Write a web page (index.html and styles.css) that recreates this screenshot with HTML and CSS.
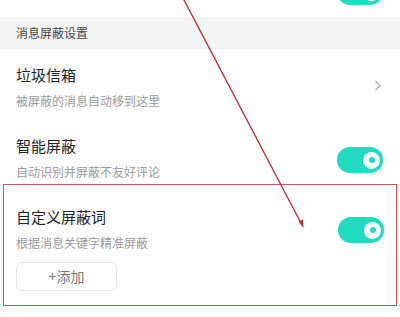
FILE: index.html
```html
<!DOCTYPE html>
<html lang="zh">
<head>
<meta charset="utf-8">
<link rel="stylesheet" href="styles.css">
</head>
<body>
<div class="page">
  <div class="row row-prev">
    <div class="text">
      <div class="title">消息提醒</div>
      <div class="sub">开启后接收新消息提醒</div>
    </div>
    <div class="toggle toggle-prev"><span class="knob"></span></div>
  </div>
  <div class="section">消息屏蔽设置</div>
  <div class="row">
    <div class="text">
      <div class="title">垃圾信箱</div>
      <div class="sub">被屏蔽的消息自动移到这里</div>
    </div>
    <svg class="chevron" width="8" height="11" viewBox="0 0 8 11"><polyline points="1.5,1 6,5.5 1.5,10" fill="none" stroke="#b0b0b0" stroke-width="1.3"/></svg>
  </div>
  <div class="row row-last">
    <div class="text">
      <div class="title">智能屏蔽</div>
      <div class="sub">自动识别并屏蔽不友好评论</div>
    </div>
    <div class="toggle"><span class="knob"></span></div>
  </div>
  <div class="boxed">
    <div class="boxed-head">
      <div class="text">
        <div class="title">自定义屏蔽词</div>
        <div class="sub">根据消息关键字精准屏蔽</div>
      </div>
      <div class="toggle toggle-box"><span class="knob"></span></div>
    </div>
    <div class="add-btn">+添加</div>
  </div>
  <svg class="arrow" width="400" height="317" viewBox="0 0 400 317">
    <line x1="183" y1="-2" x2="302" y2="225" stroke="#b3343c" stroke-width="1.4"/>
    <polygon points="303.5,228 298.5,221.5 303,219.5" fill="#b3343c"/>
  </svg>
</div>
</body>
</html>
```
FILE: styles.css
```css
html, body {
  margin: 0;
  padding: 0;
  background: #fff;
}
body {
  font-family: "Noto Sans CJK SC", "Noto Sans", sans-serif;
  width: 400px;
  height: 317px;
  overflow: hidden;
}
.page {
  position: relative;
  width: 400px;
  height: 317px;
  overflow: hidden;
}
.row {
  display: flex;
  align-items: center;
  justify-content: space-between;
  padding: 15px 17px 10px 16px;
  height: 46px;
}
.row-prev {
  margin-top: -58px;
  padding-bottom: 14px;
}
.row-last {
  padding-bottom: 3px;
}
.text {
  display: flex;
  flex-direction: column;
}
.title {
  font-size: 15px;
  line-height: 22px;
  color: #222;
}
.sub {
  margin-top: 6px;
  font-size: 12px;
  line-height: 18px;
  color: #9a9a9a;
}
.row-prev .sub {
  color: #c8c8c8;
}
.section {
  height: 32px;
  background: #f4f4f4;
  padding-left: 16px;
  font-size: 12px;
  line-height: 32px;
  color: #444;
}
.chevron {
  margin-top: -4px;
  margin-right: 1px;
}
.toggle {
  position: relative;
  width: 46px;
  height: 26px;
  border-radius: 13px;
  background: #1fdbbf;
  margin-top: 4px;
  display: flex;
  align-items: center;
  justify-content: flex-end;
  padding-right: 3px;
  box-sizing: border-box;
}
.toggle-prev {
  margin-top: 24px;
}
.toggle-box {
  margin-top: 2px;
}
.knob {
  width: 17px;
  height: 17px;
  border-radius: 50%;
  background: #fff;
  display: flex;
  align-items: center;
  justify-content: center;
}
.knob::after {
  content: "";
  width: 6px;
  height: 6px;
  border-radius: 50%;
  background: #1fdbbf;
}
.boxed {
  margin: 0 3px;
  border: 1.5px solid #c6585a;
  padding: 21px 12px 11px 12px;
  height: 88px;
}
.boxed-head {
  display: flex;
  align-items: center;
  justify-content: space-between;
}
.add-btn {
  margin-top: 10px;
  width: 99px;
  height: 27px;
  border: 1px solid #e6e6e6;
  border-radius: 6px;
  font-size: 14px;
  line-height: 27px;
  text-align: center;
  color: #777;
}
.arrow {
  position: absolute;
  left: 0;
  top: 0;
  pointer-events: none;
}
```
